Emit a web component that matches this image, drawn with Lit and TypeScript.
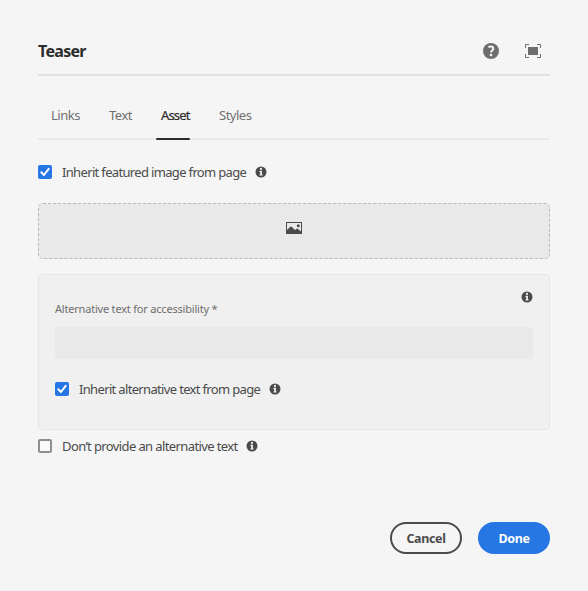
import { LitElement, html, css, svg } from "lit";
import { customElement, property } from "lit/decorators.js";

@customElement("info-icon")
class InfoIcon extends LitElement {
  static styles = css`
    :host { display: block; width: 12px; height: 12px; color: #4b4b4b; flex: none; }
    svg { display: block; }
  `;
  render() {
    return html`<svg width="12" height="12" viewBox="0 0 12 12">
      <circle cx="6" cy="6" r="5.5" fill="currentColor" />
      <circle cx="6" cy="2.9" r="1.05" fill="#f5f5f5" />
      <path d="M4.5 4.8H6.9V8.4H7.6V9.5H4.5V8.4H5.2V5.9H4.5z" fill="#f5f5f5" />
    </svg>`;
  }
}

@customElement("check-row")
class CheckRow extends LitElement {
  @property() label = "";
  @property({ type: Boolean }) checked = false;
  static styles = css`
    :host { display: flex; align-items: center; height: 20px; }
    .box { width: 14px; height: 14px; flex: none; margin-right: 10px; }
    .label { font-size: 13px; line-height: 20px; letter-spacing: var(--track, -0.5px); color: #4b4b4b; white-space: nowrap; width: var(--label-width); margin-right: 8px; }
    svg { display: block; }
  `;
  render() {
    return html`
      <svg class="box" viewBox="0 0 14 14">
        ${this.checked
          ? svg`<rect width="14" height="14" rx="2" fill="#2676e3" />
              <path d="M3.3 7.2L5.9 10L10.7 3.8" fill="none" stroke="#fff" stroke-width="2" stroke-linecap="round" stroke-linejoin="round" />`
          : svg`<rect x="1" y="1" width="12" height="12" rx="1.2" fill="#fafafa" stroke="#8e8e8e" stroke-width="2" />`}
      </svg>
      <span class="label">${this.label}</span>
      <info-icon></info-icon>
    `;
  }
}

@customElement("app-root")
class AppRoot extends LitElement {
  static styles = css`
    :host {
      display: block; box-sizing: border-box; height: 591px; padding: 28px 38px 0;
      background: #f5f5f5; font-family: "Noto Sans", "Open Sans", sans-serif; color: #4b4b4b;
    }
    * { box-sizing: border-box; }
    svg { display: block; }
    .header { display: flex; align-items: center; height: 48px; border-bottom: 2px solid #e1e1e1; }
    .title { margin: 0; flex: 1; font-size: 16px; line-height: 24px; font-weight: 700; letter-spacing: -0.7px; color: #2c2c2c; }
    .tools { display: flex; align-items: center; gap: 25px; padding-right: 8px; }
    .tabs { display: flex; height: 64px; padding: 29px 0 0 13px; gap: 29px; border-bottom: 2px solid #eaeaea; }
    .tab { height: 35px; font-size: 13px; line-height: 20px; color: #707070; white-space: nowrap; letter-spacing: -0.5px; }
    .links { width: 29px; }
    .text { width: 23px; }
    .styles { width: 33px; }
    .asset { width: 29px; color: #2c2c2c; letter-spacing: -0.85px; position: relative; -webkit-text-stroke: 0.2px currentColor; }
    .asset::after { content: ""; position: absolute; left: -5px; right: 0; bottom: 0; height: 2px; background: #2c2c2c; border-radius: 1px; }
    .featured { margin-top: 22px; --label-width: 185px; --track: -0.66px; }
    .drop { margin-top: 21px; height: 56px; display: flex; justify-content: center; padding-top: 18px; background: #e9e9e9; border: 1px dashed #b9b9b9; border-radius: 5px; }
    .panel { margin-top: 15px; height: 156px; padding: 16px; background: #f0f0f0; border: 1px solid #e6e6e6; border-radius: 4px; }
    .hint { display: flex; justify-content: flex-end; height: 10px; }
    .caption { display: block; font-size: 11px; line-height: 16px; letter-spacing: -0.2px; color: #6e6e6e; white-space: nowrap; }
    .field { height: 32px; margin: 10px 0 20px; background: #e9e9e9; border-radius: 4px; }
    .alt { --label-width: 182px; --track: -0.66px; }
    .none { margin-top: 6px; --label-width: 176px; --track: -0.61px; }
    .actions { display: flex; justify-content: flex-end; gap: 16px; margin-top: 66px; }
    .btn { width: 72px; height: 32px; padding: 1px 0 0; border-radius: 16px; border: 2px solid #4b4b4b; background: transparent; font: 700 12.5px/27px "Noto Sans", sans-serif; letter-spacing: -0.35px; color: #4b4b4b; }
    .primary { border-color: #2676e3; background: #2676e3; color: #fff; }
  `;
  render() {
    return html`
      <div class="header">
        <h1 class="title">Teaser</h1>
        <div class="tools">
          <svg width="16" height="16" viewBox="0 0 16 16">
            <circle cx="8" cy="8" r="8" fill="#6e6e6e" />
            <path d="M5.4 4.2C7.4 2.9 10.3 3.3 10.3 5.6C10.3 7.5 8.1 7.5 8.1 9.4" fill="none" stroke="#f5f5f5" stroke-width="2" />
            <circle cx="8" cy="12" r="1.35" fill="#f5f5f5" />
          </svg>
          <svg width="18" height="16" viewBox="0 0 18 16">
            <rect x="4" y="4" width="10" height="8" fill="#6e6e6e" />
            <path d="M1.5 5V1.5H5M13 1.5H16.5V5M16.5 11V14.5H13M5 14.5H1.5V11" fill="none" stroke="#6e6e6e" />
          </svg>
        </div>
      </div>
      <div class="tabs">
        <span class="tab links">Links</span>
        <span class="tab text">Text</span>
        <span class="tab asset">Asset</span>
        <span class="tab styles">Styles</span>
      </div>
      <check-row class="featured" checked label="Inherit featured image from page"></check-row>
      <div class="drop">
        <svg width="16" height="12" viewBox="0 0 16 12">
          <rect x=".5" y=".5" width="15" height="11" fill="none" stroke="#4b4b4b" />
          <path d="M1 8L4 5Q5 4 6 5L9 8L10.3 6.9Q11.2 6.2 12 7L15 9.5V12H1z" fill="#4b4b4b" />
          <circle cx="12.3" cy="3.7" r="1.5" fill="#4b4b4b" />
        </svg>
      </div>
      <div class="panel">
        <div class="hint"><info-icon></info-icon></div>
        <span class="caption">Alternative text for accessibility *</span>
        <div class="field"></div>
        <check-row class="alt" checked label="Inherit alternative text from page"></check-row>
      </div>
      <check-row class="none" label="Don’t provide an alternative text"></check-row>
      <div class="actions">
        <button class="btn">Cancel</button>
        <button class="btn primary">Done</button>
      </div>
    `;
  }
}
